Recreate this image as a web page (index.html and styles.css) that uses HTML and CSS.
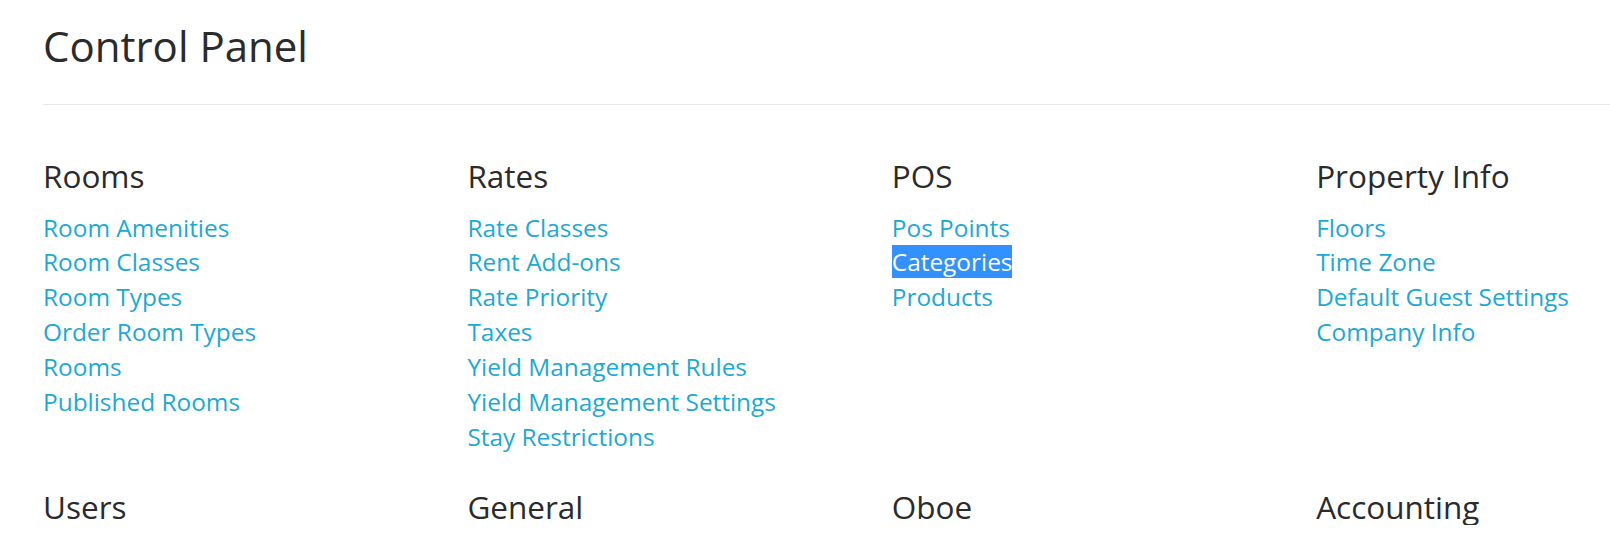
FILE: index.html
```html
<!DOCTYPE html>
<html lang="en">
<head>
<meta charset="utf-8">
<title>Control Panel</title>
<link rel="stylesheet" href="styles.css">
</head>
<body>
<div class="page">
  <h1 class="page-title">Control Panel</h1>
  <hr class="divider">
  <div class="sections">
    <section class="section">
      <h3 class="section-title">Rooms</h3>
      <ul class="links">
        <li><a href="#">Room Amenities</a></li>
        <li><a href="#">Room Classes</a></li>
        <li><a href="#">Room Types</a></li>
        <li><a href="#">Order Room Types</a></li>
        <li><a href="#">Rooms</a></li>
        <li><a href="#">Published Rooms</a></li>
      </ul>
    </section>
    <section class="section">
      <h3 class="section-title">Rates</h3>
      <ul class="links">
        <li><a href="#">Rate Classes</a></li>
        <li><a href="#">Rent Add-ons</a></li>
        <li><a href="#">Rate Priority</a></li>
        <li><a href="#">Taxes</a></li>
        <li><a href="#">Yield Management Rules</a></li>
        <li><a href="#">Yield Management Settings</a></li>
        <li><a href="#">Stay Restrictions</a></li>
      </ul>
    </section>
    <section class="section">
      <h3 class="section-title">POS</h3>
      <ul class="links">
        <li><a href="#">Pos Points</a></li>
        <li><a href="#" class="selected">Categories</a></li>
        <li><a href="#">Products</a></li>
      </ul>
    </section>
    <section class="section">
      <h3 class="section-title">Property Info</h3>
      <ul class="links">
        <li><a href="#">Floors</a></li>
        <li><a href="#">Time Zone</a></li>
        <li><a href="#">Default Guest Settings</a></li>
        <li><a href="#">Company Info</a></li>
      </ul>
    </section>
    <section class="section">
      <h3 class="section-title">Users</h3>
    </section>
    <section class="section">
      <h3 class="section-title">General</h3>
    </section>
    <section class="section">
      <h3 class="section-title">Oboe</h3>
    </section>
    <section class="section">
      <h3 class="section-title">Accounting</h3>
    </section>
  </div>
</div>
</body>
</html>
```

FILE: styles.css
```css
html, body {
  margin: 0;
  padding: 0;
  background: #ffffff;
  overflow: hidden;
}

body {
  font-family: "Open Sans", "Liberation Sans", sans-serif;
  color: #333333;
}

.page {
  padding-left: 43px;
}

.page-title {
  margin: 21px 0 0;
  font-size: 42px;
  line-height: 50px;
  font-weight: 400;
  color: #2b2b2b;
}

.divider {
  margin: 33px 0 0;
  border: 0;
  border-top: 1px solid #e8e8e8;
  height: 0;
}

.sections {
  display: grid;
  grid-template-columns: 424.4px 424.4px 424.4px 1fr;
  row-gap: 34.5px;
  padding-top: 53px;
}

.section-title {
  margin: 0;
  font-size: 31.5px;
  line-height: 36px;
  font-weight: 400;
  color: #2b2b2b;
}

.links {
  list-style: none;
  margin: 16.5px 0 0;
  padding: 0;
}

.links li {
  font-size: 24.4px;
  line-height: 34.9px;
}

.links a {
  color: #1ca9d4;
  text-decoration: none;
}

.links a.selected {
  background: #3390ff;
  color: #ffffff;
}
```
